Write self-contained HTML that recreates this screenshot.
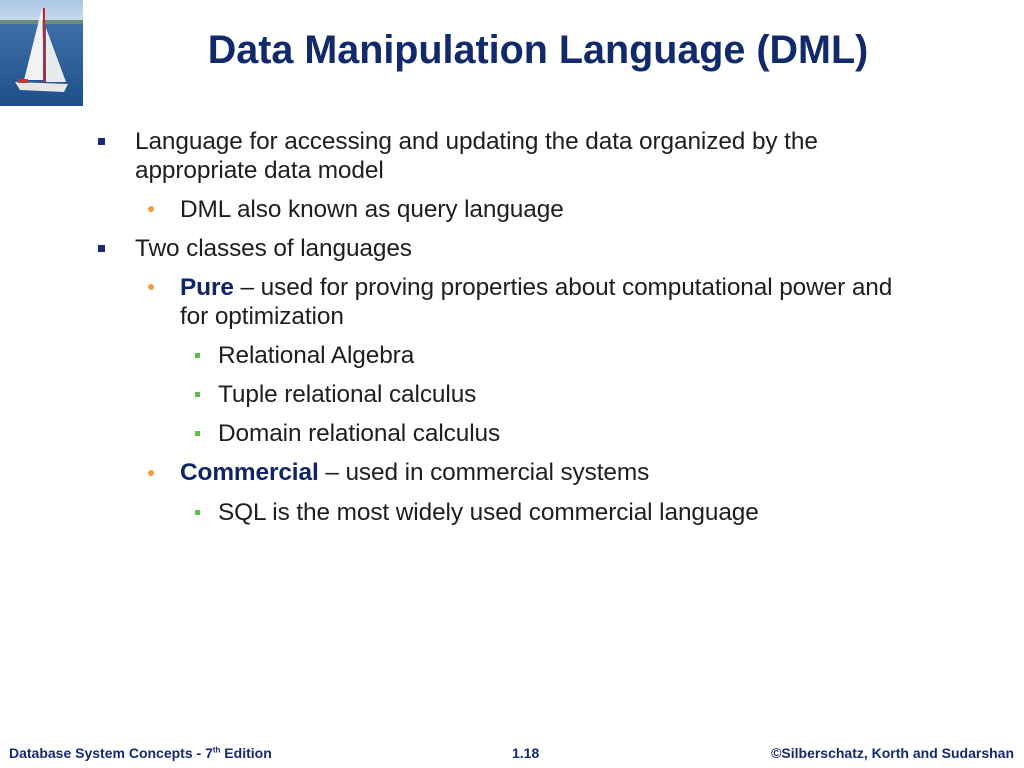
<!DOCTYPE html>
<html><head><meta charset="utf-8"><style>
body{margin:0;width:1024px;height:768px;background:#fff;position:relative;overflow:hidden;font-family:"Liberation Sans",Arial,sans-serif;}
.t{position:absolute;font-size:24.4px;line-height:26px;color:#1e1e1e;white-space:nowrap;letter-spacing:-0.1px;}
.b{color:#0f2568;font-weight:bold;}
.sq{position:absolute;width:7px;height:7px;background:#1a2a6e;}
.dot{position:absolute;width:6px;height:6px;border-radius:50%;background:#f39a3c;}
.gs{position:absolute;width:5px;height:5px;background:#5cc24a;}
.title{position:absolute;left:0;width:1076px;text-align:center;top:28px;font-size:39.5px;font-weight:bold;color:#112a6c;}
.foot{position:absolute;top:745px;font-size:14px;font-weight:bold;color:#14296f;}
</style></head><body>
<svg style="position:absolute;left:0;top:0" width="83" height="106" viewBox="0 0 83 106">
<defs><linearGradient id="sea" x1="0" y1="0" x2="0" y2="1"><stop offset="0" stop-color="#3f6fa6"/><stop offset="1" stop-color="#1d4f8a"/></linearGradient>
<linearGradient id="sky" x1="0" y1="0" x2="0" y2="1"><stop offset="0" stop-color="#a9c6e6"/><stop offset="1" stop-color="#cddff0"/></linearGradient></defs>
<rect width="83" height="24" fill="url(#sky)"/>
<rect y="20" width="83" height="5" fill="#6f8a78"/>
<rect y="24" width="83" height="82" fill="url(#sea)"/>
<polygon points="42,8 44,80 24,80" fill="#f2f2f2"/>
<polygon points="46,28 46,82 66,82" fill="#e8ebee"/>
<rect x="43" y="8" width="2" height="76" fill="#c8242a"/>
<polygon points="15,82 68,84 64,92 20,90" fill="#e6e6e6"/>
<rect x="18" y="79" width="10" height="4" fill="#c0393a"/>
</svg>
<div class="title">Data Manipulation Language (DML)</div>

<div class="sq" style="left:98px;top:138px"></div>
<div class="t" style="left:135px;top:129px">Language for accessing and updating the data organized by the</div>
<div class="t" style="left:135px;top:158px">appropriate data model</div>
<div class="dot" style="left:148px;top:206px"></div>
<div class="t" style="left:180px;top:197px">DML also known as query language</div>
<div class="sq" style="left:98px;top:245px"></div>
<div class="t" style="left:135px;top:236px">Two classes of languages</div>
<div class="dot" style="left:148px;top:284px"></div>
<div class="t" style="left:180px;top:275px"><span class="b">Pure</span> – used for proving properties about computational power and</div>
<div class="t" style="left:180px;top:304px">for optimization</div>
<div class="gs" style="left:195px;top:353px"></div>
<div class="t" style="left:218px;top:343px">Relational Algebra</div>
<div class="gs" style="left:195px;top:392px"></div>
<div class="t" style="left:218px;top:382px">Tuple relational calculus</div>
<div class="gs" style="left:195px;top:431px"></div>
<div class="t" style="left:218px;top:421px">Domain relational calculus</div>
<div class="dot" style="left:148px;top:470px"></div>
<div class="t" style="left:180px;top:460px"><span class="b">Commercial</span> – used in commercial systems</div>
<div class="gs" style="left:195px;top:510px"></div>
<div class="t" style="left:218px;top:500px">SQL is the most widely used commercial language</div>

<div class="foot" style="left:9px">Database System Concepts - 7<sup style="font-size:8px">th</sup> Edition</div>
<div class="foot" style="left:512px">1.18</div>
<div class="foot" style="right:10px">©Silberschatz, Korth and Sudarshan</div>
</body></html>
